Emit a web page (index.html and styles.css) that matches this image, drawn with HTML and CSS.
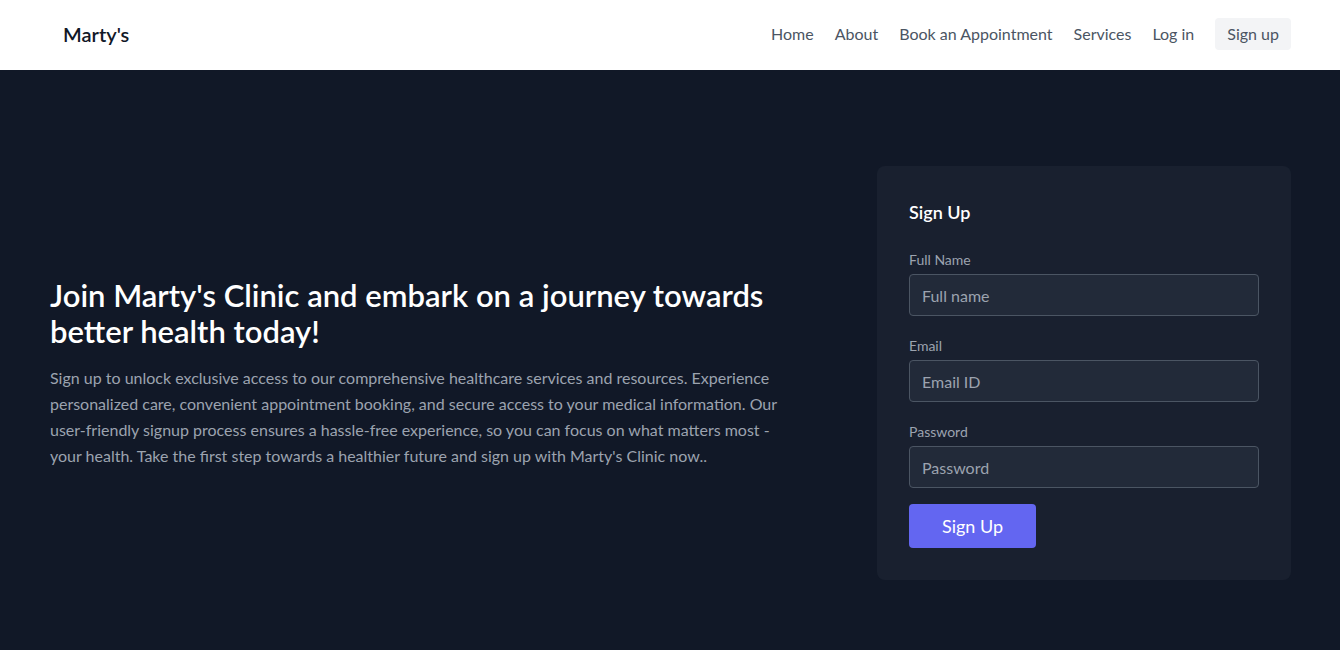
FILE: index.html
```html
<!DOCTYPE html>
<html lang="en">
<head>
<meta charset="utf-8">
<title>Marty's - Sign up</title>
<link rel="stylesheet" href="styles.css">
</head>
<body>
<header class="nav">
  <a class="logo" href="#">Marty's</a>
  <nav class="links">
    <a href="#">Home</a>
    <a href="#">About</a>
    <a href="#">Book an Appointment</a>
    <a href="#">Services</a>
    <a href="#">Log in</a>
    <a href="#" class="signup">Sign up</a>
  </nav>
</header>
<main class="hero">
  <section class="intro">
    <h1>Join Marty's Clinic and embark on a journey towards better health today!</h1>
    <p>Sign up to unlock exclusive access to our comprehensive healthcare services and resources. Experience personalized care, convenient appointment booking, and secure access to your medical information. Our user-friendly signup process ensures a hassle-free experience, so you can focus on what matters most - your health. Take the first step towards a healthier future and sign up with Marty's Clinic now..</p>
  </section>
  <form class="card">
    <h2>Sign Up</h2>
    <div class="field">
      <label for="name">Full Name</label>
      <input id="name" type="text" placeholder="Full name">
    </div>
    <div class="field">
      <label for="email">Email</label>
      <input id="email" type="email" placeholder="Email ID">
    </div>
    <div class="field">
      <label for="pw">Password</label>
      <input id="pw" type="password" placeholder="Password">
    </div>
    <button type="button" class="btn">Sign Up</button>
  </form>
</main>
</body>
</html>
```
FILE: styles.css
```css
* { box-sizing: border-box; }
html, body { margin: 0; padding: 0; }
body {
  font-family: Lato, "Open Sans", sans-serif;
  background: #111827;
  min-height: 650px;
}
a { text-decoration: none; }
.nav {
  height: 70px;
  background: #ffffff;
  display: flex;
  align-items: center;
  justify-content: space-between;
  padding: 0 49px 2px 63px;
}
.logo {
  font-size: 20px;
  font-weight: 600;
  color: #111827;
}
.links {
  display: flex;
  align-items: center;
  gap: 21px;
}
.links a {
  color: #4b5563;
  font-size: 16px;
  line-height: 20px;
}
.links a.signup {
  background: #f3f4f6;
  border-radius: 4px;
  padding: 6px 12px;
}
.hero {
  display: flex;
  align-items: center;
  justify-content: space-between;
  padding: 96px 49px 70px 50px;
}
.intro {
  width: 750px;
}
.intro h1 {
  margin: 0 0 16px;
  color: #ffffff;
  font-size: 31px;
  line-height: 36px;
  font-weight: 600;
}
.intro p {
  margin: 0;
  color: #9ca3af;
  font-size: 16px;
  line-height: 26px;
}
.card {
  width: 414px;
  background: #19202f;
  border-radius: 8px;
  padding: 32px;
}
.card h2 {
  margin: 0 0 24px;
  color: #ffffff;
  font-size: 18px;
  line-height: 28px;
  font-weight: 600;
}
.field {
  display: flex;
  flex-direction: column;
  margin-bottom: 20px;
}
.field:last-of-type { margin-bottom: 16px; }
.field label {
  color: #9ca3af;
  font-size: 14px;
  line-height: 20px;
  margin-bottom: 4px;
}
.field input {
  height: 42px;
  width: 350px;
  background: #222a39;
  border: 1px solid #4b5563;
  border-radius: 4px;
  padding: 0 12px;
  font-family: inherit;
  font-size: 16px;
  color: #e5e7eb;
  outline: none;
}
.field input::placeholder { color: #9ca3af; }
.btn {
  display: block;
  width: 127px;
  height: 44px;
  background: #6366f1;
  color: #ffffff;
  border: 0;
  border-radius: 4px;
  font-family: inherit;
  font-size: 18px;
}
```
